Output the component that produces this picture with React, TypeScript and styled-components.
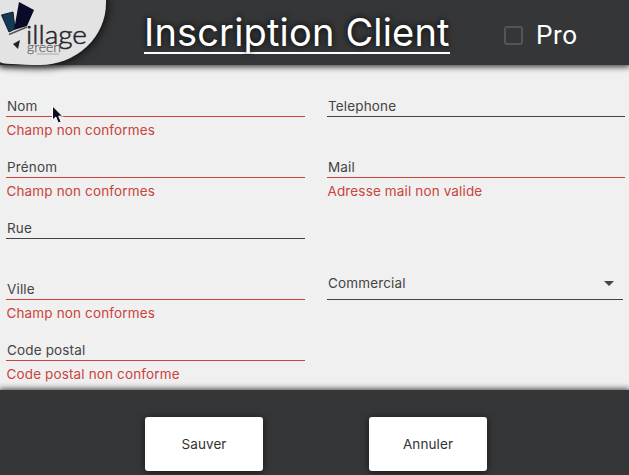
import React from "react";
import styled, { createGlobalStyle } from "styled-components";

const Global = createGlobalStyle`
  * { box-sizing: border-box; }
  body { margin: 0; overflow: hidden; font-family: Inter, "Liberation Sans", sans-serif; }
`;
const Screen = styled.div`
  width: 629px; height: 475px; display: flex; flex-direction: column; background: #f0f0f0; overflow: hidden;
`;
const Header = styled.header`
  height: 65px; flex: none; display: flex; align-items: flex-start; background: #343637;
  box-shadow: 0 1px 6px 1px rgba(0,0,0,.75); position: relative;
`;
const Brand = styled.div`
  width: 106px; height: 65px; flex: none; background: #e3e3e3; border-radius: 0 0 66px 40px / 0 0 62px 3px;
  box-shadow: 0 0 8px 2px rgba(0,0,0,.7);
`;
const Title = styled.h1`
  margin: 9px 0 0 38px; width: 306px; height: 45px; padding-left: 0; border-bottom: 2px solid #fff; color: #fff; font-size: 38px;
  line-height: 47px; font-weight: 400; font-family: Inter, sans-serif; letter-spacing: .17px; white-space: nowrap; text-shadow: 0 0 6px #000;
`;
const Pro = styled.label`
  display: flex; align-items: center; gap: 13px; margin: 19px 0 0 54px; height: 32px; color: #fff;
  font: 26px/32px Roboto, sans-serif; letter-spacing: .6px;
`;
const Box = styled.span`
  width: 19px; height: 19px; border: 2px solid #555; border-radius: 3px;
`;
const Form = styled.main`
  flex: 1 1 0; min-height: 0; display: grid; grid-template-columns: 299px 298px; column-gap: 22px;
  padding: 32px 0 0 6px; align-content: start;
`;
const Column = styled.div`display: flex; flex-direction: column;`;
const Field = styled.div`height: 61px; flex: none;`;
const Label = styled.div<{ $line: string }>`
  height: 20px; padding-left: 1px; border-bottom: 1px solid ${(p) => p.$line}; color: #444; font-size: 13.5px;
  line-height: 18px; letter-spacing: .15px;
`;
const ErrorText = styled.div`
  margin-top: 4px; padding-left: .5px; color: #c8443c; font-size: 13.5px; line-height: 19px; letter-spacing: .14px; white-space: nowrap;
`;
const Select = styled.div`
  margin-top: 55px; width: 296px; height: 26px; padding: 0 9px 0 1px; display: flex; align-items: flex-start;
  justify-content: space-between; border-bottom: 1px solid #444; color: #444; font-size: 13.5px; line-height: 18px;
  letter-spacing: .15px;
`;
const Arrow = styled.span`
  margin-top: 7px; border: 5px solid transparent; border-top-color: #444; border-bottom: 0;
`;
const Footer = styled.footer`
  height: 85px; flex: none; padding: 27px 0 0 145px; display: flex; gap: 106px; background: #343637;
  box-shadow: 0 0 6px 1px rgba(0,0,0,.75);
`;
const Button = styled.button`
  width: 118px; height: 54px; border: 0; border-radius: 3px; background: #fff; color: #333; padding: 0;
  font: 13.5px Inter, sans-serif; letter-spacing: .1px; box-shadow: 0 1px 7px rgba(0,0,0,.6);
`;
const Pointer = styled.svg`position: absolute; left: 51px; top: 105px; z-index: 2;`;

type Item = { label: string; error?: string };
const left: Item[] = [
  { label: "Nom", error: "Champ non conformes" },
  { label: "Prénom", error: "Champ non conformes" },
  { label: "Rue" },
  { label: "Ville", error: "Champ non conformes" },
  { label: "Code postal", error: "Code postal non conforme" },
];
const right: Item[] = [{ label: "Telephone" }, { label: "Mail", error: "Adresse mail non valide" }];

const Entry = ({ label, error }: Item) => (
  <Field>
    <Label $line={error ? "#c8443c" : "#444"}>{label}</Label>
    {error && <ErrorText>{error}</ErrorText>}
  </Field>
);

const Logo = () => (
  <svg width="106" height="65" viewBox="0 0 106 65" display="block">
    <path d="M1.5 15 13 12 15 29 9 32Z" fill="#123a55" stroke="#15192a" />
    <path d="M19 2 34 10 27 26 14 30Z" fill="#090b29" />
    <path d="m9 34.5 18-7.5" stroke="#555" strokeWidth="1.4" />
    <path d="m13 44 7-4-2 9Z" fill="#222" />
    <g fontFamily="Lato, sans-serif">
      <text x="26" y="44" fontSize="25" fontWeight="300" fill="#25252b" stroke="#25252b" strokeWidth=".5" textLength="61" lengthAdjust="spacingAndGlyphs">illage</text>
      <text x="27" y="52" fontSize="13.5" fontWeight="300" fill="#666" stroke="#666" strokeWidth=".25" textLength="34" lengthAdjust="spacingAndGlyphs">green</text>
    </g>
    <path d="M37 54h22" stroke="#aaa" />
  </svg>
);

export default function App() {
  return (
    <Screen>
      <Global />
      <Header>
        <Brand><Logo /></Brand>
        <Title>Inscription Client</Title>
        <Pro><Box />Pro</Pro>
      </Header>
      <Form>
        <Column>{left.map((f) => <Entry key={f.label} {...f} />)}</Column>
        <Column>
          {right.map((f) => <Entry key={f.label} {...f} />)}
          <Select>Commercial<Arrow /></Select>
        </Column>
      </Form>
      <Footer><Button>Sauver</Button><Button>Annuler</Button></Footer>
      <Pointer width="13" height="20" viewBox="0 0 13 20">
        <path d="M1.5 1v14l3.3-3 2.4 6 3-1.2-2.5-5.6h4Z" fill="#0b0c20" stroke="#fff" />
      </Pointer>
    </Screen>
  );
}
